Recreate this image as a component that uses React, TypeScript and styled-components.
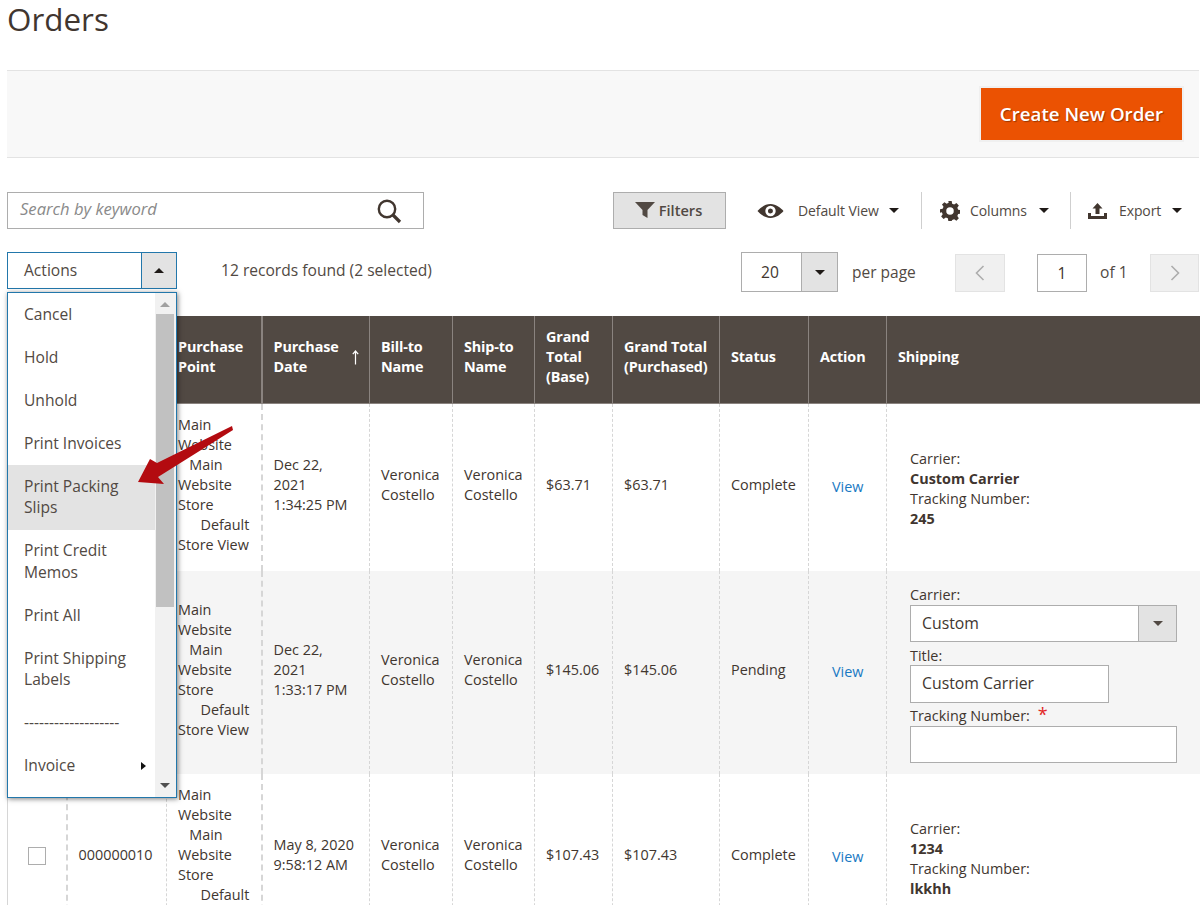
import React from "react";
import styled, { createGlobalStyle } from "styled-components";

const Global = createGlobalStyle`
  html, body { margin: 0; padding: 0; background: #fff; }
  body { font-family: "Open Sans", "DejaVu Sans", sans-serif; font-size: 14.4px; color: #303030; }
  #root { width: 1204px; height: 905px; overflow: hidden; }
  * { box-sizing: border-box; }
`;

const Page = styled.div`
  position: relative;
  width: 1204px;
  height: 905px;
  overflow: hidden;
  padding: 0 5px 0 7px;
`;

const Title = styled.h1`
  margin: 0;
  height: 70px;
  font-size: 31.4px;
  font-weight: 400;
  line-height: 38px;
  color: #41362f;
`;

const ActionBar = styled.div`
  height: 88px;
  display: flex;
  justify-content: flex-end;
  align-items: center;
  padding-right: 17px;
  background: #f8f8f8;
  border-top: 1px solid #e3e3e3;
  border-bottom: 1px solid #e3e3e3;
`;

const PrimaryButton = styled.button`
  width: 201px;
  height: 52px;
  padding: 0 0 2px;
  background: #eb5202;
  border: 0;
  box-shadow: 0 0 0 2px #f0f0f0;
  color: #fff;
  font: 600 18.7px "Open Sans", sans-serif;
  text-shadow: 1px 1px 1px rgba(0, 0, 0, 0.35);
`;

const Toolbar = styled.div`
  display: flex;
  align-items: center;
  height: 37px;
  margin-top: 34px;
`;

const Search = styled.div`
  width: 417px;
  height: 37px;
  display: flex;
  align-items: center;
  justify-content: space-between;
  padding: 0 21px 0 12px;
  border: 1px solid #adadad;
  font-style: italic;
  font-size: 16.6px;
  color: #8a8a8a;
`;

const SearchHint = styled.span`
  margin-top: -5px;
`;

const FilterButton = styled.button`
  display: flex;
  align-items: center;
  justify-content: center;
  gap: 3px;
  width: 113px;
  height: 37px;
  margin-left: 189px;
  padding: 0 3px 2px 0;
  background: #e3e3e3;
  border: 1px solid #adadad;
  color: #514943;
  font: 600 14.6px "Open Sans", sans-serif;
`;

const ToolGroup = styled.div<{ $w: number; $divider?: boolean; $pad: number }>`
  display: flex;
  align-items: center;
  width: ${(p) => p.$w}px;
  height: 37px;
  padding-left: ${(p) => p.$pad}px;
  border-right: ${(p) => (p.$divider ? "1px solid #cfcfcf" : "0")};
  color: #514943;
  font-size: 14px;
  letter-spacing: -0.1px;
`;

const ToolLabel = styled.span<{ $gap: number }>`
  margin-left: ${(p) => p.$gap}px;
  white-space: nowrap;
`;

const Caret = styled.i<{ $gap?: number; $up?: boolean; $c?: string }>`
  display: inline-block;
  width: 0;
  height: 0;
  margin-left: ${(p) => p.$gap ?? 0}px;
  border-left: 5px solid transparent;
  border-right: 5px solid transparent;
  ${(p) => (p.$up ? "border-bottom" : "border-top")}: 5px solid ${(p) => p.$c ?? "#1f1a17"};
`;

const PagerRow = styled.div`
  display: flex;
  height: 40px;
  margin-top: 23px;
  & > * { flex: none; }
`;

const ActionsSelect = styled.div`
  display: flex;
  width: 170px;
  height: 37px;
  border: 1px solid #2277ab;
  color: #514943;
  font-size: 15.6px;
`;

const ActionsLabel = styled.div`
  width: 134px;
  padding-left: 16px;
  line-height: 34px;
  border-right: 1px solid #2277ab;
`;

const SelectTick = styled.div<{ $w: number }>`
  display: flex;
  align-items: center;
  justify-content: center;
  width: ${(p) => p.$w}px;
  background: #e3e3e3;
`;

const Records = styled.div`
  margin-left: 44px;
  width: 520px;
  line-height: 36px;
  font-size: 15.6px;
  color: #514943;
`;

const PageSize = styled.div`
  display: flex;
  width: 97px;
  height: 40px;
  border: 1px solid #adadad;
  font-size: 15.6px;
  color: #41362f;
`;

const PageSizeValue = styled.div`
  width: 60px;
  padding-left: 19px;
  line-height: 38px;
  border-right: 1px solid #adadad;
`;

const PerPage = styled.div`
  width: 103px;
  margin-left: 14px;
  line-height: 40px;
  font-size: 15.5px;
  color: #514943;
`;

const PagerButton = styled.div<{ $w: number }>`
  display: flex;
  align-items: center;
  justify-content: center;
  width: ${(p) => p.$w}px;
  height: 38px;
  margin-top: 2px;
  background: #f0f0f0;
  border: 1px solid #e3e3e3;
`;

const PageInput = styled.div`
  width: 50px;
  height: 38px;
  margin: 2px 0 0 32px;
  border: 1px solid #adadad;
  text-align: center;
  line-height: 36px;
  font-size: 15.6px;
  color: #41362f;
`;

const PageOf = styled.div`
  width: 50px;
  margin: 2px 0 0 13px;
  line-height: 36px;
  font-size: 15.6px;
  color: #514943;
`;

const Grid = styled.table`
  width: 1192px;
  margin-top: 24px;
  table-layout: fixed;
  border-collapse: collapse;
  font-size: 14.4px;
  line-height: 20px;
`;

const Th = styled.th`
  padding: 11px 6px 16px 11px;
  background: #514943;
  border-left: 1px solid #8a837f;
  border-bottom: 1px solid #8a837f;
  color: #fff;
  font-weight: 700;
  font-size: 14.4px;
  text-align: left;
  vertical-align: middle;
  letter-spacing: -0.15px;
  &:nth-child(4) { border-left-width: 2px; }
`;

const SortArrow = styled.span`
  display: flex;
  align-items: center;
  justify-content: space-between;
  padding-right: 3px;
`;

const Row = styled.tr<{ $alt?: boolean }>`
  background: ${(p) => (p.$alt ? "#f5f5f5" : "#fff")};
`;

const Td = styled.td<{ $pt?: number; $pb?: number; $pl?: number }>`
  padding: ${(p) => p.$pt ?? 11}px 6px ${(p) => p.$pb ?? 16}px ${(p) => p.$pl ?? 11}px;
  border-left: 1px dashed #d6d6d6;
  vertical-align: middle;
  color: #41362f;
  &:first-child { border-left: 1px solid #d6d6d6; }
  &:nth-child(2), &:nth-child(4) { border-left-width: 2px; }
  &:nth-child(4) { padding-right: 13px; }
`;

const Box = styled.span`
  display: block;
  width: 18px;
  height: 18px;
  margin: 2px 0 0 9px;
  border: 1px solid #adadad;
  background: #fff;
`;

const ViewLink = styled.a`
  color: #1979c3;
  text-decoration: none;
`;

const Field = styled.div<{ $w: number; $h?: number }>`
  display: flex;
  height: ${(p) => p.$h ?? 37}px;
  width: ${(p) => p.$w}px;
  border: 1px solid #adadad;
  background: #fff;
  line-height: 35px;
  padding-left: 11px;
  font-size: 15.8px;
  color: #41362f;
`;

const ShipSelect = styled(Field)`
  justify-content: space-between;
  padding-right: 0;
`;

const SelectEnd = styled.span`
  display: flex;
  align-items: center;
  justify-content: center;
  width: 38px;
  background: #e3e3e3;
  border-left: 1px solid #adadad;
`;

const FieldLabel = styled.div<{ $mt?: number; $h?: number }>`
  margin-top: ${(p) => p.$mt ?? 0}px;
  height: ${(p) => p.$h ?? 20}px;
`;

const Required = styled.span`
  margin-left: 8px;
  color: #e22626;
  font-size: 18px;
`;

const Menu = styled.div`
  position: absolute;
  left: 7px;
  top: 292px;
  width: 170px;
  height: 506px;
  display: flex;
  background: #fff;
  border: 1px solid #2277ab;
  box-shadow: 1px 1px 5px rgba(0, 0, 0, 0.5);
  overflow: hidden;
  z-index: 2;
`;

const MenuList = styled.ul`
  flex: 1;
  margin: 0;
  padding: 0;
  list-style: none;
`;

const MenuItem = styled.li<{ $on?: boolean }>`
  display: flex;
  align-items: center;
  justify-content: space-between;
  padding: 10.75px 9px 10.75px 16px;
  background: ${(p) => (p.$on ? "#e3e3e3" : "transparent")};
  color: #514943;
  font-size: 15.6px;
  line-height: 21.5px;
`;

const SubArrow = styled.i`
  width: 0;
  height: 0;
  border-top: 4px solid transparent;
  border-bottom: 4px solid transparent;
  border-left: 5px solid #111;
`;

const Scrollbar = styled.div`
  position: relative;
  flex: none;
  width: 21px;
  padding: 0 2px 0 1px;
  background: #f1f1f1;
`;

const ScrollThumb = styled.div`
  height: 293px;
  margin-top: 21px;
  background: #c1c1c1;
`;

const ScrollEnd = styled.span<{ $top: boolean }>`
  position: absolute;
  left: 5px;
  ${(p) => (p.$top ? "top: 9px;" : "bottom: 9px;")}
  line-height: 0;
`;

const Annotation = styled.svg`
  position: absolute;
  left: 130px;
  top: 420px;
  z-index: 3;
`;

const IconSvg = styled.svg`
  display: block;
  flex: none;
`;

const SearchIcon = () => (
  <IconSvg width="26" height="26" viewBox="0 0 26 26" fill="none" stroke="#41362f" strokeWidth="2.4">
    <circle cx="11" cy="11" r="8.2" />
    <path d="M17 17l7 7" strokeWidth="3.2" />
  </IconSvg>
);

const Funnel = () => (
  <IconSvg width="22" height="20" viewBox="0 0 22 20" fill="#514943">
    <path d="M1 2h20l-7.500 8v8l-5-3v-5z" />
  </IconSvg>
);

const Eye = () => (
  <IconSvg width="27" height="18" viewBox="0 0 27 18">
    <path fill="#41362f" fillRule="evenodd" d="M13.5 2C7.8 2 3 6 .5 9c2.500 3 7.300 7 13 7s10.500-4 13-7c-2.500-3-7.300-7-13-7zm0 1.800a5.200 5.200 0 1 1 0 10.400 5.200 5.200 0 0 1 0-10.400zm0 2.700a2.500 2.500 0 1 0 0 5 2.500 2.500 0 0 0 0-5z" />
  </IconSvg>
);

const Gear = () => (
  <IconSvg width="20" height="20" viewBox="0 0 24 24">
    <path fill="#41362f" fillRule="evenodd" d="M10 0h4l.6 3.200 2.400 1 2.700-1.800 2.900 2.900-1.800 2.700 1 2.400 3.200.6v4l-3.200.6-1 2.400 1.800 2.700-2.900 2.900-2.700-1.800-2.400 1L14 24h-4l-.6-3.200-2.400-1-2.700 1.800-2.900-2.900 1.800-2.700-1-2.400L0 14v-4l3.200-.6 1-2.400-1.800-2.700 2.900-2.900 2.700 1.800 2.400-1zM12 7.500a4.500 4.500 0 1 0 0 9 4.500 4.500 0 0 0 0-9z" />
  </IconSvg>
);

const Upload = () => (
  <IconSvg width="19" height="16" viewBox="0 0 19 16">
    <path fill="#41362f" d="M9.500 0l5 5.500h-3V11h-4V5.500h-3zM0 10h3v3h13v-3h3v6H0z" />
  </IconSvg>
);

const Chevron = ({ left }: { left?: boolean }) => (
  <IconSvg width="10" height="16" viewBox="0 0 10 16" fill="none" stroke="#adadad" strokeWidth="1.600">
    <path d={left ? "M8.500 1L1.500 8l7 7" : "M1.500 1l7 7-7 7"} />
  </IconSvg>
);

const UpArrow = () => (
  <IconSvg width="9" height="15" viewBox="0 0 9 15" fill="none" stroke="#fff" strokeWidth="1.200">
    <path d="M4.500 14.500V1M1.800 4.200L4.500 1l2.700 3.200" />
  </IconSvg>
);

const PointCell = () => (
  <>
    Main Website
    <br />
    {"\u00a0\u00a0\u00a0"}Main Website Store
    <br />
    {"\u00a0\u00a0\u00a0\u00a0\u00a0\u00a0"}Default Store View
  </>
);

const widths = [59, 100, 95, 108, 83, 82, 78, 107, 89, 78, 313];

const Columns = () => (
  <colgroup>
    {widths.map((w, i) => (
      <col key={i} width={w} />
    ))}
  </colgroup>
);

const menuItems = [
  "Cancel",
  "Hold",
  "Unhold",
  "Print Invoices",
  "Print Packing Slips",
  "Print Credit Memos",
  "Print All",
  "Print Shipping Labels",
  "-------------------",
];

const CommonCells = ({ date, base, status }: { date: React.ReactNode; base: string; status: string }) => (
  <>
    <Td><PointCell /></Td>
    <Td>{date}</Td>
    <Td>Veronica Costello</Td>
    <Td>Veronica Costello</Td>
    <Td>{base}</Td>
    <Td>{base}</Td>
    <Td>{status}</Td>
    <Td $pl={23} $pt={15}><ViewLink>View</ViewLink></Td>
  </>
);

export default function App() {
  return (
    <Page>
      <Global />
      <Title>Orders</Title>
      <ActionBar>
        <PrimaryButton>Create New Order</PrimaryButton>
      </ActionBar>

      <Toolbar>
        <Search>
          <SearchHint>Search by keyword</SearchHint>
          <SearchIcon />
        </Search>
        <FilterButton>
          <Funnel />
          Filters
        </FilterButton>
        <ToolGroup $w={196} $pad={31} $divider>
          <Eye />
          <ToolLabel $gap={14}>Default View</ToolLabel>
          <Caret $gap={10} />
        </ToolGroup>
        <ToolGroup $w={149} $pad={18} $divider>
          <Gear />
          <ToolLabel $gap={10}>Columns</ToolLabel>
          <Caret $gap={12} />
        </ToolGroup>
        <ToolGroup $w={120} $pad={17}>
          <Upload />
          <ToolLabel $gap={12}>Export</ToolLabel>
          <Caret $gap={11} />
        </ToolGroup>
      </Toolbar>

      <PagerRow>
        <ActionsSelect>
          <ActionsLabel>Actions</ActionsLabel>
          <SelectTick $w={34}><Caret $up /></SelectTick>
        </ActionsSelect>
        <Records>12 records found (2 selected)</Records>
        <PageSize>
          <PageSizeValue>20</PageSizeValue>
          <SelectTick $w={35}><Caret /></SelectTick>
        </PageSize>
        <PerPage>per page</PerPage>
        <PagerButton $w={50}><Chevron left /></PagerButton>
        <PageInput>1</PageInput>
        <PageOf>of 1</PageOf>
        <PagerButton $w={49}><Chevron /></PagerButton>
      </PagerRow>

      <Grid>
        <Columns />
        <thead>
          <tr>
            <Th />
            <Th>ID</Th>
            <Th>Purchase Point</Th>
            <Th>
              <SortArrow>
                <span>Purchase<br />Date</span>
                <UpArrow />
              </SortArrow>
            </Th>
            <Th>Bill-to Name</Th>
            <Th>Ship-to Name</Th>
            <Th>Grand Total (Base)</Th>
            <Th>Grand Total (Purchased)</Th>
            <Th>Status</Th>
            <Th>Action</Th>
            <Th>Shipping</Th>
          </tr>
        </thead>
        <tbody>
          <Row>
            <Td><Box /></Td>
            <Td>000000012</Td>
            <CommonCells date="Dec 22, 2021 1:34:25 PM" base="$63.71" status="Complete" />
            <Td $pl={23} $pt={13} $pb={10}>
              Carrier:
              <br />
              <b>Custom Carrier</b>
              <br />
              Tracking Number:
              <br />
              <b>245</b>
            </Td>
          </Row>
          <Row $alt>
            <Td><Box /></Td>
            <Td>000000011</Td>
            <CommonCells date="Dec 22, 2021 1:33:17 PM" base="$145.06" status="Pending" />
            <Td $pl={23} $pt={14} $pb={11}>
              <FieldLabel>Carrier:</FieldLabel>
              <ShipSelect $w={267}>
                Custom
                <SelectEnd><Caret $c="#514943" /></SelectEnd>
              </ShipSelect>
              <FieldLabel $mt={4} $h={19}>Title:</FieldLabel>
              <Field $w={199} $h={38}>Custom Carrier</Field>
              <FieldLabel $mt={1} $h={22}>
                Tracking Number:<Required>*</Required>
              </FieldLabel>
              <Field $w={267} />
            </Td>
          </Row>
          <Row>
            <Td><Box /></Td>
            <Td>000000010</Td>
            <CommonCells date="May 8, 2020 9:58:12 AM" base="$107.43" status="Complete" />
            <Td $pl={23} $pt={13} $pb={10}>
              Carrier:
              <br />
              <b>1234</b>
              <br />
              Tracking Number:
              <br />
              <b>lkkhh</b>
            </Td>
          </Row>
        </tbody>
      </Grid>

      <Menu>
        <MenuList>
          {menuItems.map((m) => (
            <MenuItem key={m} $on={m === "Print Packing Slips"}>{m}</MenuItem>
          ))}
          <MenuItem>
            Invoice
            <SubArrow />
          </MenuItem>
        </MenuList>
        <Scrollbar>
          <ScrollEnd $top><Caret $up $c="#a0a0a0" /></ScrollEnd>
          <ScrollThumb />
          <ScrollEnd $top={false}><Caret $c="#505050" /></ScrollEnd>
        </Scrollbar>
      </Menu>

      <Annotation width="110" height="70" viewBox="130 420 110 70">
        <polygon fill="#b30b10" points="232,426 157,463 150,459 138,482 164,484 158,477 233,430" />
      </Annotation>
    </Page>
  );
}
